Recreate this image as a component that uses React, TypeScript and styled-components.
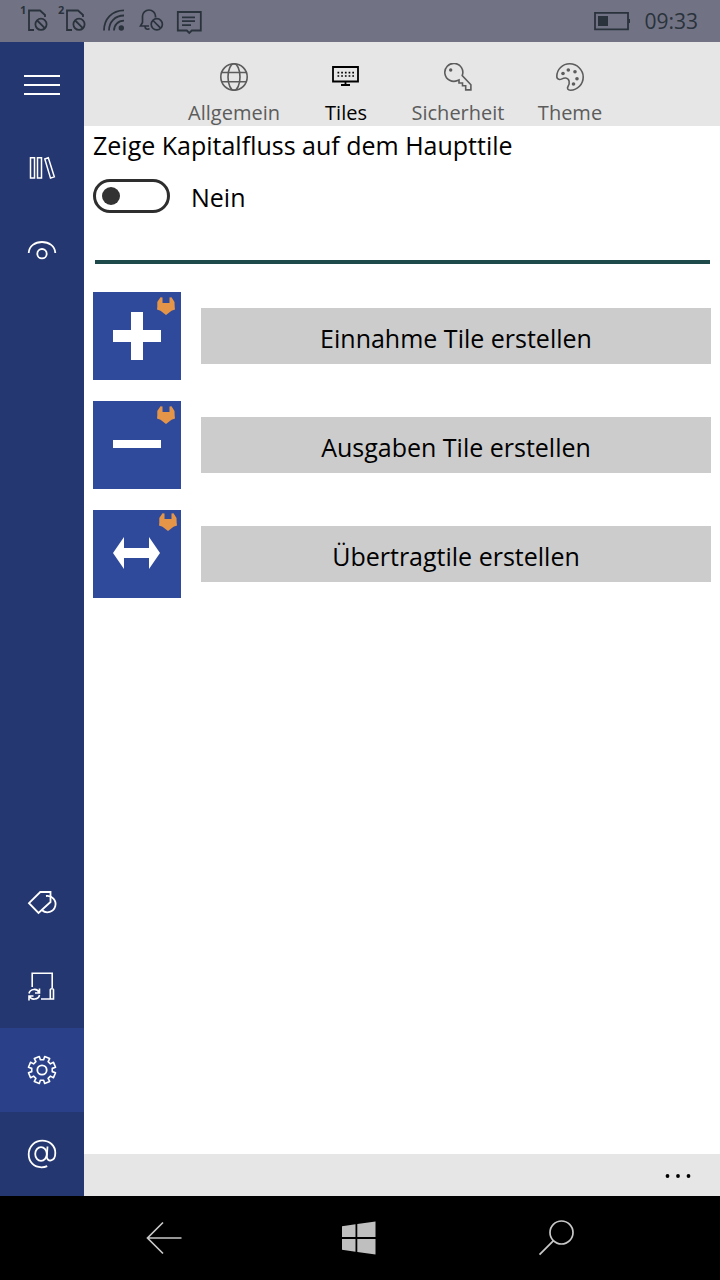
import React, { useState } from "react";
import styled, { createGlobalStyle } from "styled-components";

const GlobalStyle = createGlobalStyle`
  *, *::before, *::after { box-sizing: border-box; }
  body {
    margin: 0;
    background: #fff;
    color: #000;
    font-family: "Open Sans", "Noto Sans", sans-serif;
  }
  button { font-family: inherit; }
  svg { display: block; flex: none; }
`;

const Screen = styled.div`
  display: flex;
  flex-direction: column;
  min-height: 100vh;
`;

const StatusBar = styled.header`
  display: flex;
  justify-content: space-between;
  align-items: center;
  height: 42px;
  padding: 0 22px 0 20px;
  background: #717384;
  color: #2a323c;
`;

const StatusGroup = styled.div<{ $gap: number }>`
  display: flex;
  align-items: center;
  gap: ${(p) => p.$gap}px;
`;

const Clock = styled.time`
  font-size: 21px;
  line-height: 42px;
`;

const Body = styled.div`
  display: flex;
  flex: 1;
`;

const Sidebar = styled.nav`
  display: flex;
  flex-direction: column;
  justify-content: space-between;
  width: 84px;
  flex: none;
  background: #253770;
`;

const SideButton = styled.button<{ $active?: boolean }>`
  display: block;
  width: 84px;
  height: 84px;
  padding: 0;
  border: 0;
  color: #fff;
  background: ${(p) => (p.$active ? "#2a4189" : "transparent")};
`;

const Main = styled.main`
  display: flex;
  flex-direction: column;
  flex: 1;
  min-width: 0;
`;

const TabBar = styled.div`
  display: flex;
  justify-content: center;
  height: 84px;
  background: #e6e6e6;
`;

const Tab = styled.button<{ $active?: boolean }>`
  display: flex;
  flex-direction: column;
  align-items: center;
  gap: 10px;
  width: 112px;
  padding: 21px 0 0;
  border: 0;
  background: none;
  color: ${(p) => (p.$active ? "#000" : "#5c5c5c")};
  font-size: 20px;
  line-height: 24px;
`;

const Content = styled.section`
  flex: 1;
  padding: 0 9px;
`;

const SettingLabel = styled.label`
  display: block;
  font-size: 25px;
  line-height: 38px;
`;

const SwitchRow = styled.div`
  display: flex;
  align-items: center;
  gap: 21px;
  margin-top: 15px;
`;

const Switch = styled.input`
  appearance: none;
  display: flex;
  align-items: center;
  width: 77px;
  height: 34px;
  margin: 0;
  padding: 0 6px;
  border: 3px solid #2e2e2e;
  border-radius: 17px;

  &::before {
    content: "";
    width: 18px;
    height: 18px;
    border-radius: 50%;
    background: #333;
  }

  &:checked {
    justify-content: flex-end;
  }
`;

const SwitchState = styled.span`
  padding-top: 3px;
  font-size: 25px;
  line-height: 31px;
`;

const Divider = styled.hr`
  height: 4px;
  margin: 47px 1px 28px 2px;
  border: 0;
  background: #1f4a4c;
`;

const TileList = styled.ul`
  display: flex;
  flex-direction: column;
  gap: 21px;
  margin: 0;
  padding: 0;
  list-style: none;
`;

const TileRow = styled.li`
  display: flex;
  align-items: center;
  gap: 20px;
`;

const TileButton = styled.button`
  flex: 1;
  height: 56px;
  padding: 4px 0 0;
  border: 0;
  background: #ccc;
  color: #000;
  font-size: 25px;
  line-height: 34px;
`;

const CommandBar = styled.div`
  display: flex;
  justify-content: flex-end;
  height: 42px;
  background: #e6e6e6;
`;

const MoreButton = styled.button`
  width: 84px;
  padding: 0;
  border: 0;
  background: none;
`;

const SystemBar = styled.footer`
  display: flex;
  justify-content: center;
  height: 84px;
  background: #000;
`;

const SystemButton = styled.button`
  display: flex;
  align-items: center;
  justify-content: center;
  width: 196px;
  padding: 0;
  border: 0;
  background: none;
  color: #c8c8c8;
`;

const line = { fill: "none", stroke: "currentColor" } as const;

const SimIcon = ({ slot }: { slot: string }) => (
  <svg width="28" height="42" viewBox="0 0 28 42" {...line} strokeWidth="1.8">
    <text x="0" y="14" fontSize="11" fontWeight="700" fill="currentColor" stroke="none">{slot}</text>
    <path d="M14 30H9V10.5h11l5 4.5v2" />
    <circle cx="21" cy="24.3" r="5.6" />
    <path d="M17.2 20.5l7.6 7.6" />
  </svg>
);

const WifiIcon = () => (
  <svg width="30" height="42" viewBox="0 0 30 42" {...line} strokeWidth="1.8">
    <path d="M8 30.500C8 19 16 10.300 28 10.300M13 30.500C13 22 19 15.500 28 15.500M18 30.500C18 25 22 20.700 28 20.700" />
    <circle cx="25.300" cy="28" r="2.700" fill="currentColor" stroke="none" />
  </svg>
);

const BellIcon = () => (
  <svg width="30" height="42" viewBox="0 0 30 42" {...line} strokeWidth="1.7">
    <path d="M19.500 17.500V16a6.500 6 0 0 0-13 0v6.500L4.500 26H13M9 26.500c0 2.500 3 3.500 4.500 2" />
    <circle cx="20.800" cy="24.300" r="5.600" />
    <path d="M17 20.500l7.600 7.600" />
  </svg>
);

const MessageIcon = () => (
  <svg width="26" height="42" viewBox="0 0 26 42" {...line} strokeWidth="1.8">
    <path d="M1.800 12h23v18.500h-9l-2.500 2.500-2.500-2.500h-9zM6 17.300h13M6 21.200h13M6 25.200h9" />
  </svg>
);

const BatteryIcon = () => (
  <svg width="37" height="42" viewBox="0 0 37 42" {...line} strokeWidth="1.8">
    <path d="M2 12.900h33v16.400H2z" />
    <path d="M5 16h10v10H5zM35.500 19h2v4h-2z" fill="currentColor" stroke="none" />
  </svg>
);

const SideIcon = ({ children }: { children: React.ReactNode }) => (
  <svg width="84" height="84" viewBox="0 0 84 84" {...line} strokeWidth="1.8">
    {children}
  </svg>
);

const gearPath = (teeth: number, outer: number, inner: number) => {
  const step = (Math.PI * 2) / teeth;
  const points: string[] = [];
  for (let i = 0; i < teeth; i++) {
    const mid = -Math.PI / 2 + (i + 0.5) * step;
    const corners: [number, number][] = [
      [-0.3, inner],
      [-0.25, outer],
      [0.25, outer],
      [0.3, inner],
    ];
    corners.forEach(([offset, radius]) => {
      const a = mid + offset * step;
      points.push(`${(42 + radius * Math.cos(a)).toFixed(2)} ${(42 + radius * Math.sin(a)).toFixed(2)}`);
    });
  }
  return `M${points.join("L")}Z`;
};

const TabIcon = ({ children }: { children: React.ReactNode }) => (
  <svg width="28" height="28" viewBox="0 0 28 28" {...line} strokeWidth="1.6">
    {children}
  </svg>
);

const tabs = [
  {
    label: "Allgemein",
    icon: (
      <TabIcon>
        <circle cx="14" cy="14" r="13.200" />
        <ellipse cx="14" cy="14" rx="6" ry="13.200" />
        <path d="M1.800 9.500h24.400M1.800 18.700h24.400" />
      </TabIcon>
    ),
  },
  {
    label: "Tiles",
    icon: (
      <TabIcon>
        <path d="M1 4h25v14.500H1zM13.500 18.500v3.500M9 22h9" strokeWidth="1.8" />
        <path d="M5.500 9.700h16.500M5.500 13h16.500" strokeWidth="1.700" strokeDasharray="1.700 2" />
      </TabIcon>
    ),
  },
  {
    label: "Sicherheit",
    icon: (
      <TabIcon>
        <path d="M18.200 12.600A9 9 0 1 0 13.600 17.500L15 17v3h3.500v2.700h3.200v4.200h5.200v-5.200z" />
        <circle cx="6.700" cy="7" r="1.700" fill="currentColor" stroke="none" />
      </TabIcon>
    ),
  },
  {
    label: "Theme",
    icon: (
      <TabIcon>
        <path d="M.8 13.500C.8 6.500 6.500.8 13.700.8S27.200 6.800 27.200 14 21.500 27.200 14.500 27.200c-2.700 0-3.700-1.700-2.500-3.700 2.200-3.500 1.500-8-2.300-8.500-3.200-.4-4 1.800-6.200 1.500-1.900-.3-2.700-1.600-2.700-3z" />
        <g fill="currentColor" stroke="none">
          <circle cx="7" cy="10.500" r="1.800" />
          <circle cx="12.300" cy="7" r="1.800" />
          <circle cx="19" cy="8.700" r="1.800" />
          <circle cx="21" cy="15.700" r="1.800" />
          <circle cx="17.500" cy="21" r="1.800" />
        </g>
      </TabIcon>
    ),
  },
];

const FOX =
  "M.3 5L3.500.3 5.500.5V6h7V.5L14.500.3 17.500 5 17.700 10 18 12.500 14.500 13.700 9 18 3.500 13.700 0 12.500.3 10z";

const TileIcon = ({ shape, foxX, foxY }: { shape: string; foxX: number; foxY: number }) => (
  <svg width="88" height="88" viewBox="0 0 88 88" aria-hidden="true">
    <path d="M0 0h88v88H0z" fill="#304a9b" />
    <path d={shape} fill="#fff" />
    <path d={FOX} transform={`translate(${foxX} ${foxY})`} fill="#e59548" />
  </svg>
);

const tiles = [
  { label: "Einnahme Tile erstellen", shape: "M20 38h18V20h12v18h18v12H50v18H38V50H20z", foxX: 64, foxY: 5 },
  { label: "Ausgaben Tile erstellen", shape: "M20 39h48v8H20z", foxX: 64, foxY: 5 },
  { label: "Übertragtile erstellen", shape: "M20 43L31 27v11h25V27l11 16-11 16V48H31v11z", foxX: 66, foxY: 3 },
];

export default function App() {
  const [flow, setFlow] = useState(false);

  return (
    <>
      <GlobalStyle />
      <Screen>
        <StatusBar>
          <StatusGroup $gap={10}>
            <SimIcon slot="1" />
            <SimIcon slot="2" />
            <WifiIcon />
            <BellIcon />
            <MessageIcon />
          </StatusGroup>
          <StatusGroup $gap={14}>
            <BatteryIcon />
            <Clock>09:33</Clock>
          </StatusGroup>
        </StatusBar>

        <Body>
          <Sidebar>
            <div>
              <SideButton aria-label="Menü">
                <SideIcon>
                  <path d="M24 34h36M24 43h36M24 52h36" strokeWidth="2" />
                </SideIcon>
              </SideButton>
              <SideButton aria-label="Konten">
                <SideIcon>
                  <path d="M30.500 31.700h4v20.300h-4zM37.500 31.700h4v20.300h-4zM44.800 33l3.500-1.200 6 19-3.800 1.300z" strokeWidth="1.500" />
                </SideIcon>
              </SideButton>
              <SideButton aria-label="Übersicht">
                <SideIcon>
                  <path d="M28.700 43C29 36 35 32 42 32s13 4 13.300 11" />
                  <circle cx="42" cy="43.700" r="4.700" />
                </SideIcon>
              </SideButton>
            </div>
            <div>
              <SideButton aria-label="Kategorien">
                <SideIcon>
                  <path d="M29 43.200L40.300 32H50.500v10L38.500 53z" />
                  <path d="M46 36a8.200 8.200 0 1 1-4 14.300" />
                </SideIcon>
              </SideButton>
              <SideButton aria-label="Sicherung">
                <SideIcon>
                  <path d="M32.200 43V29.200h20V44M41 55h12.500v-9.500c0-1-3.200-1-3.200 0V55" strokeWidth="1.600" />
                  <path d="M29 49.500c1-5 8.500-5.500 10-1M39.500 44.500V49h-4.500M39.500 51c-1 5-8.500 5.500-10 1M29 56.500V52h4.500" strokeWidth="1.600" />
                </SideIcon>
              </SideButton>
              <SideButton $active aria-label="Einstellungen">
                <SideIcon>
                  <path d={gearPath(8, 13.8, 10.4)} strokeLinejoin="round" strokeWidth="1.600" />
                  <circle cx="42" cy="42" r="4.700" />
                </SideIcon>
              </SideButton>
              <SideButton aria-label="Info">
                <SideIcon>
                  <ellipse cx="41" cy="42" rx="5.800" ry="6.800" />
                  <path d="M47.500 34.500L46.800 44.500C46.800 50.500 55.300 50 55.300 41 55.300 33.500 49.500 28.700 42.300 28.700 34.500 28.700 28.700 34.500 28.700 42.300S34 55.300 41.500 55.300c2.300 0 4-.4 5.700-1.200" />
                </SideIcon>
              </SideButton>
            </div>
          </Sidebar>

          <Main>
            <TabBar role="tablist">
              {tabs.map((tab) => {
                const active = tab.label === "Tiles";
                return (
                  <Tab key={tab.label} role="tab" aria-selected={active} $active={active}>
                    {tab.icon}
                    {tab.label}
                  </Tab>
                );
              })}
            </TabBar>

            <Content>
              <SettingLabel htmlFor="flow">Zeige Kapitalfluss auf dem Haupttile</SettingLabel>
              <SwitchRow>
                <Switch
                  id="flow"
                  type="checkbox"
                  role="switch"
                  checked={flow}
                  onChange={(e) => setFlow(e.target.checked)}
                />
                <SwitchState>{flow ? "Ja" : "Nein"}</SwitchState>
              </SwitchRow>
              <Divider />
              <TileList>
                {tiles.map(({ label, ...icon }) => (
                  <TileRow key={label}>
                    <TileIcon {...icon} />
                    <TileButton>{label}</TileButton>
                  </TileRow>
                ))}
              </TileList>
            </Content>

            <CommandBar>
              <MoreButton aria-label="Mehr">
                <svg width="84" height="42" viewBox="0 0 84 42">
                  <circle cx="31.500" cy="22" r="1.900" />
                  <circle cx="42" cy="22" r="1.900" />
                  <circle cx="52.500" cy="22" r="1.900" />
                </svg>
              </MoreButton>
            </CommandBar>
          </Main>
        </Body>

        <SystemBar>
          <SystemButton aria-label="Zurück">
            <svg width="36" height="36" viewBox="0 0 36 36" {...line} strokeWidth="1.7">
              <path d="M35.500 18H1.500M17 2.500L1.500 18l15.500 15.500" />
            </svg>
          </SystemButton>
          <SystemButton aria-label="Start">
            <svg width="36" height="36" viewBox="0 0 36 36" fill="#bfbfbf">
              <path d="M0 6.200l13.500-1.900V17H0zM15.300 4L33.500 1.500V17H15.300zM0 19h13.500v12.700L0 29.800zM15.300 19h18.200v15.500L15.300 32z" />
            </svg>
          </SystemButton>
          <SystemButton aria-label="Suchen">
            <svg width="36" height="36" viewBox="0 0 36 36" {...line} strokeWidth="1.7">
              <circle cx="23.500" cy="12.500" r="11.500" />
              <path d="M15.500 20.700L1.500 34.700" />
            </svg>
          </SystemButton>
        </SystemBar>
      </Screen>
    </>
  );
}
